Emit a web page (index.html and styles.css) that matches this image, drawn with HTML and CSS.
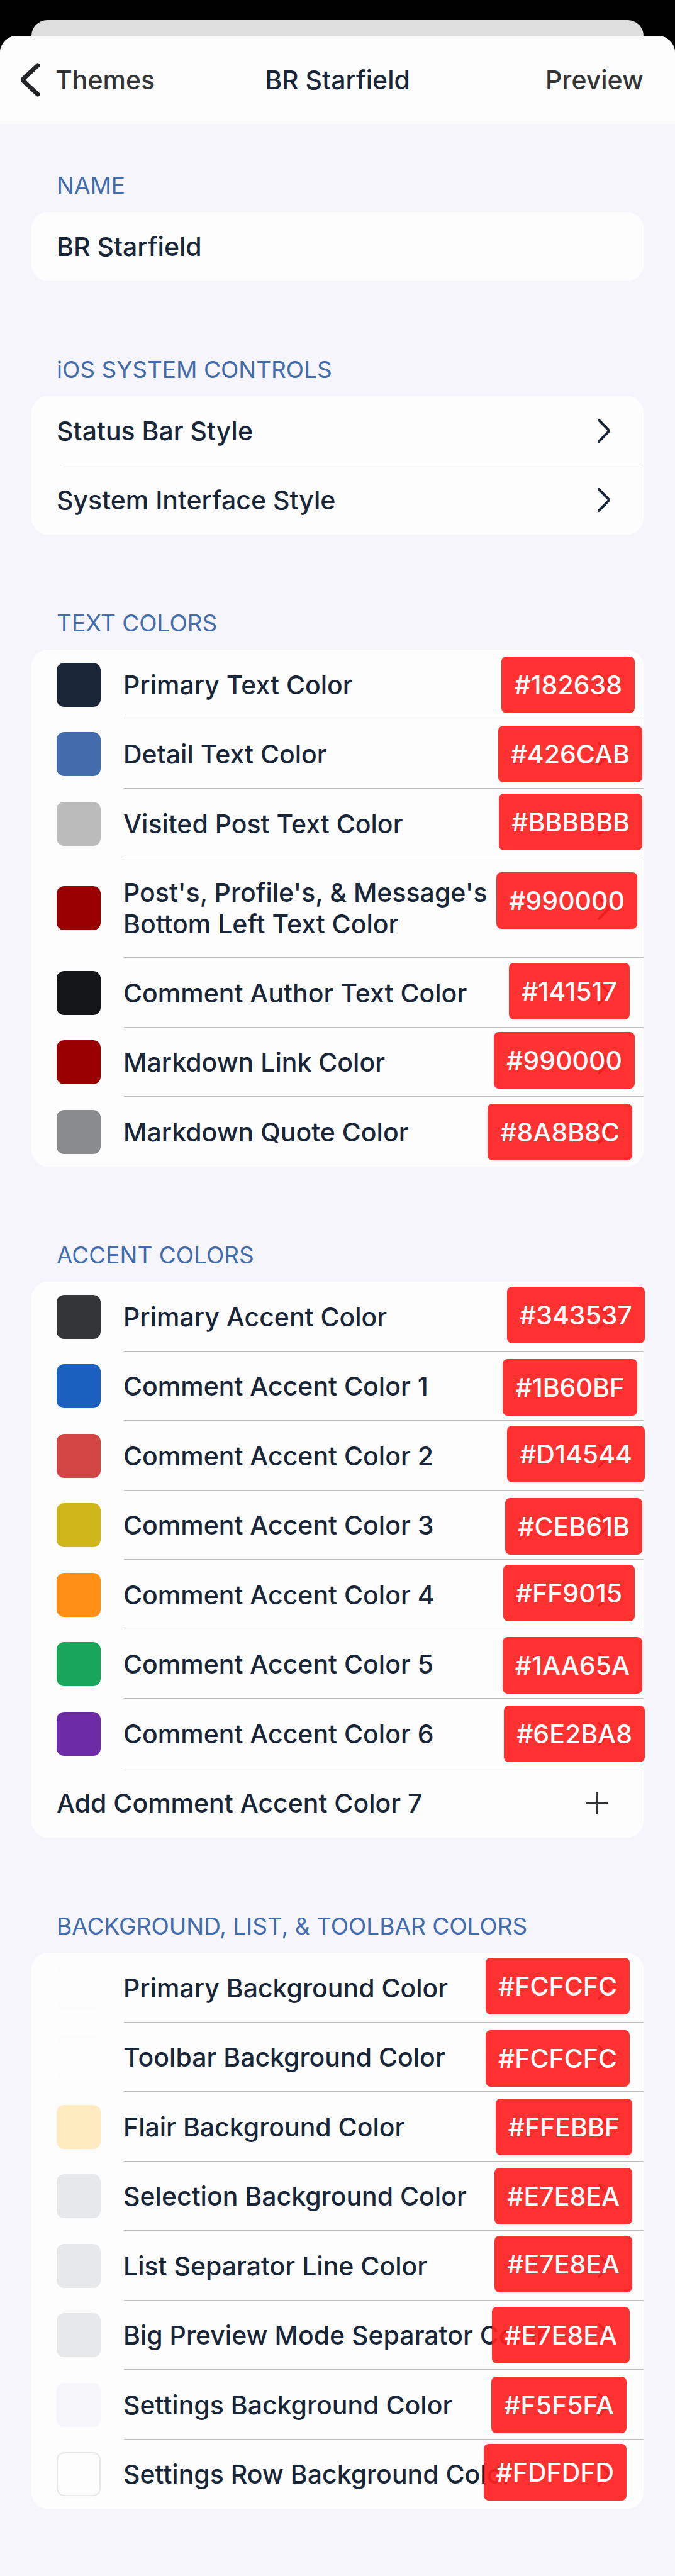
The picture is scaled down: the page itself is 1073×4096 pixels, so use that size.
FILE: index.html
```html
<!DOCTYPE html>
<html lang="en">
<head>
<meta charset="utf-8">
<meta name="viewport" content="width=device-width, initial-scale=1">
<title>BR Starfield</title>
<link rel="stylesheet" href="styles.css">
</head>
<body>
<svg class="defs" aria-hidden="true">
  <symbol id="chevron" viewBox="0 0 20 38"><path d="M2 2 L16.800 17 Q18.600 19 16.800 21 L2 36"/></symbol>
</svg>
<div class="backdrop"><div class="backdrop__sheet"></div></div>
<div class="sheet">
  <header class="nav">
    <a class="nav__back" href="#themes"><svg class="nav__icon" viewBox="0 0 32 54" aria-hidden="true"><path d="M28 4 L5.500 25 Q3.500 27 5.500 29 L28 50"/></svg>Themes</a>
    <h1 class="nav__title">BR Starfield</h1>
    <button class="nav__action" type="button">Preview</button>
  </header>
  <main class="content">
    <section class="group">
      <h2 class="group__title"><label for="theme-name">NAME</label></h2>
      <div class="card"><input class="row row--input" id="theme-name" type="text" value="BR Starfield"></div>
    </section>

    <section class="group">
      <h2 class="group__title">iOS SYSTEM CONTROLS</h2>
      <div class="card">
        <a class="row row--plain" href="#status-bar"><span class="row__label">Status Bar Style</span><svg class="chevron"><use href="#chevron"/></svg></a>
        <a class="row row--plain" href="#interface"><span class="row__label">System Interface Style</span><svg class="chevron"><use href="#chevron"/></svg></a>
      </div>
    </section>

    <section class="group">
      <h2 class="group__title">TEXT COLORS</h2>
      <div class="card">
        <a class="row row--color" href="#c"><span class="swatch" style="background:#182638"></span><span class="row__label">Primary Text Color</span><svg class="chevron"><use href="#chevron"/></svg><span class="chip chip--c">#182638</span></a>
        <a class="row row--color" href="#c"><span class="swatch" style="background:#426CAB"></span><span class="row__label">Detail Text Color</span><svg class="chevron"><use href="#chevron"/></svg><span class="chip chip--b">#426CAB</span></a>
        <a class="row row--color" href="#c"><span class="swatch" style="background:#BBBBBB"></span><span class="row__label">Visited Post Text Color</span><svg class="chevron"><use href="#chevron"/></svg><span class="chip chip--b chip--high">#BBBBBB</span></a>
        <a class="row row--color row--tall" href="#c"><span class="swatch" style="background:#990000"></span><span class="row__label">Post's, Profile's, &amp; Message's Bottom Left Text Color</span><svg class="chevron"><use href="#chevron"/></svg><span class="chip chip--bc chip--raised">#990000</span></a>
        <a class="row row--color" href="#c"><span class="swatch" style="background:#141517"></span><span class="row__label">Comment Author Text Color</span><svg class="chevron"><use href="#chevron"/></svg><span class="chip chip--e chip--high">#141517</span></a>
        <a class="row row--color" href="#c"><span class="swatch" style="background:#990000"></span><span class="row__label">Markdown Link Color</span><svg class="chevron"><use href="#chevron"/></svg><span class="chip chip--c chip--high">#990000</span></a>
        <a class="row row--color" href="#c"><span class="swatch" style="background:#8A8B8C"></span><span class="row__label">Markdown Quote Color</span><svg class="chevron"><use href="#chevron"/></svg><span class="chip chip--d">#8A8B8C</span></a>
      </div>
    </section>

    <section class="group">
      <h2 class="group__title">ACCENT COLORS</h2>
      <div class="card">
        <a class="row row--color" href="#c"><span class="swatch" style="background:#343537"></span><span class="row__label">Primary Accent Color</span><svg class="chevron"><use href="#chevron"/></svg><span class="chip chip--a chip--high">#343537</span></a>
        <a class="row row--color" href="#c"><span class="swatch" style="background:#1B60BF"></span><span class="row__label">Comment Accent Color 1</span><svg class="chevron"><use href="#chevron"/></svg><span class="chip chip--bc chip--low">#1B60BF</span></a>
        <a class="row row--color" href="#c"><span class="swatch" style="background:#D14544"></span><span class="row__label">Comment Accent Color 2</span><svg class="chevron"><use href="#chevron"/></svg><span class="chip chip--a chip--high">#D14544</span></a>
        <a class="row row--color" href="#c"><span class="swatch" style="background:#CEB61B"></span><span class="row__label">Comment Accent Color 3</span><svg class="chevron"><use href="#chevron"/></svg><span class="chip chip--b chip--low">#CEB61B</span></a>
        <a class="row row--color" href="#c"><span class="swatch" style="background:#FF9015"></span><span class="row__label">Comment Accent Color 4</span><svg class="chevron"><use href="#chevron"/></svg><span class="chip chip--c chip--high">#FF9015</span></a>
        <a class="row row--color" href="#c"><span class="swatch" style="background:#1AA65A"></span><span class="row__label">Comment Accent Color 5</span><svg class="chevron"><use href="#chevron"/></svg><span class="chip chip--b chip--low">#1AA65A</span></a>
        <a class="row row--color" href="#c"><span class="swatch" style="background:#6E2BA8"></span><span class="row__label">Comment Accent Color 6</span><svg class="chevron"><use href="#chevron"/></svg><span class="chip chip--a">#6E2BA8</span></a>
        <button class="row row--plain" type="button"><span class="row__label">Add Comment Accent Color 7</span><svg class="plus" viewBox="0 0 36 36" aria-hidden="true"><path d="M18 2V34M2 18H34"/></svg></button>
      </div>
    </section>

    <section class="group">
      <h2 class="group__title">BACKGROUND, LIST, &amp; TOOLBAR COLORS</h2>
      <div class="card">
        <a class="row row--color" href="#c"><span class="swatch" style="background:#FCFCFC"></span><span class="row__label">Primary Background Color</span><svg class="chevron"><use href="#chevron"/></svg><span class="chip chip--e chip--high">#FCFCFC</span></a>
        <a class="row row--color" href="#c"><span class="swatch" style="background:#FCFCFC"></span><span class="row__label">Toolbar Background Color</span><svg class="chevron"><use href="#chevron"/></svg><span class="chip chip--e chip--low">#FCFCFC</span></a>
        <a class="row row--color" href="#c"><span class="swatch" style="background:#FFEBBF"></span><span class="row__label">Flair Background Color</span><svg class="chevron"><use href="#chevron"/></svg><span class="chip chip--d">#FFEBBF</span></a>
        <a class="row row--color" href="#c"><span class="swatch" style="background:#E7E8EA"></span><span class="row__label">Selection Background Color</span><svg class="chevron"><use href="#chevron"/></svg><span class="chip chip--d">#E7E8EA</span></a>
        <a class="row row--color" href="#c"><span class="swatch" style="background:#E7E8EA"></span><span class="row__label">List Separator Line Color</span><svg class="chevron"><use href="#chevron"/></svg><span class="chip chip--d chip--high">#E7E8EA</span></a>
        <a class="row row--color" href="#c"><span class="swatch" style="background:#E7E8EA"></span><span class="row__label">Big Preview Mode Separator Color</span><svg class="chevron"><use href="#chevron"/></svg><span class="chip chip--e">#E7E8EA</span></a>
        <a class="row row--color" href="#c"><span class="swatch" style="background:#F5F5FA"></span><span class="row__label">Settings Background Color</span><svg class="chevron"><use href="#chevron"/></svg><span class="chip chip--f">#F5F5FA</span></a>
        <a class="row row--color" href="#c"><span class="swatch swatch--outlined" style="background:#FDFDFD"></span><span class="row__label">Settings Row Background Color</span><svg class="chevron"><use href="#chevron"/></svg><span class="chip chip--f chip--high">#FDFDFD</span></a>
      </div>
    </section>
  </main>
</div>
</body>
</html>
```
FILE: styles.css
```css
:root {
  --text: #182638;
  --detail: #426cab;
  --accent: #343537;
  --line: #bbbcbe;
}

* { box-sizing: border-box; }

body {
  margin: 0;
  background: #000;
  color: var(--text);
  font-family: Inter, "Liberation Sans", sans-serif;
  font-size: 41px;
  font-weight: 500;
  line-height: 50px;
}

a { color: inherit; text-decoration: none; }

button, input {
  font: inherit;
  color: inherit;
  border: 0;
  margin: 0;
  padding: 0;
  background: none;
  text-align: left;
}

h1, h2 { margin: 0; font-size: inherit; font-weight: inherit; }

.defs { position: absolute; width: 0; height: 0; }

/* Parent sheet peeking out behind the open one */
.backdrop { padding: 32px 50px 0; }
.backdrop__sheet {
  height: 25px;
  border-radius: 25px 25px 0 0;
  background: #dedede;
}

.sheet {
  border-radius: 27px 27px 0 0;
  background: #f5f5fb;
  overflow: hidden;
}

.nav {
  display: grid;
  grid-template-columns: 1fr auto 1fr;
  align-items: center;
  height: 140px;
  padding: 0 50px;
  background: #fcfcfc;
}
/* The back arrow hangs into the side margin */
.nav__back { display: flex; align-items: center; gap: 24px; margin-left: -18px; color: var(--accent); }
.nav__icon { width: 32px; height: 54px; fill: none; stroke: #222326; stroke-width: 7; stroke-linecap: round; }
.nav__action { justify-self: end; color: var(--accent); }

.content { padding: 67px 50px 107px; }

.group + .group { margin-top: 110px; }
.group__title {
  height: 73px;
  padding: 9px 40px 0;
  color: var(--detail);
  font-size: 37px;
  font-weight: 400;
  line-height: 44px;
}

.card { border-radius: 26px; background: #fdfdfd; }

.row {
  position: relative;
  display: flex;
  align-items: center;
  width: 100%;
  min-height: 110px;
  padding: 0 53px 0 40px;
  background: linear-gradient(var(--line), var(--line)) no-repeat right bottom / calc(100% - 147px) 1px;
}
.row--plain { background-size: calc(100% - 50px) 1px; }
.row:last-child { background: none; }
.row--color { gap: 36px; }
.row--color:nth-child(odd) { min-height: 111px; }
.row--tall { min-height: 158px; }
.row__label { flex: 1; padding-right: 30px; }

.swatch { flex: none; width: 70px; height: 70px; border-radius: 12px; }
.swatch--outlined { border: 2px solid #e7e8ea; }

.chevron { flex: none; width: 20px; height: 38px; fill: none; stroke: var(--text); stroke-width: 4; stroke-linecap: round; }
.plus { flex: none; width: 36px; height: 36px; margin-right: 3px; fill: none; stroke: var(--accent); stroke-width: 4; stroke-linecap: round; }

/* Hex annotations stuck over the rows */
.chip {
  position: absolute;
  top: calc(50% - 45px);
  height: 90px;
  padding: 0 20px;
  border-radius: 8px;
  background: rgba(255, 32, 31, 0.92);
  color: #fff;
  line-height: 90px;
}
.chip--a { right: -2px; }
.chip--b { right: 2px; }
.chip--bc { right: 10px; }
.chip--c { right: 14px; }
.chip--d { right: 18px; }
.chip--e { right: 22px; }
.chip--f { right: 27px; }
.chip--high { top: calc(50% - 48px); }
.chip--low { top: calc(50% - 43px); }
.chip--raised { top: calc(50% - 57px); }
```
